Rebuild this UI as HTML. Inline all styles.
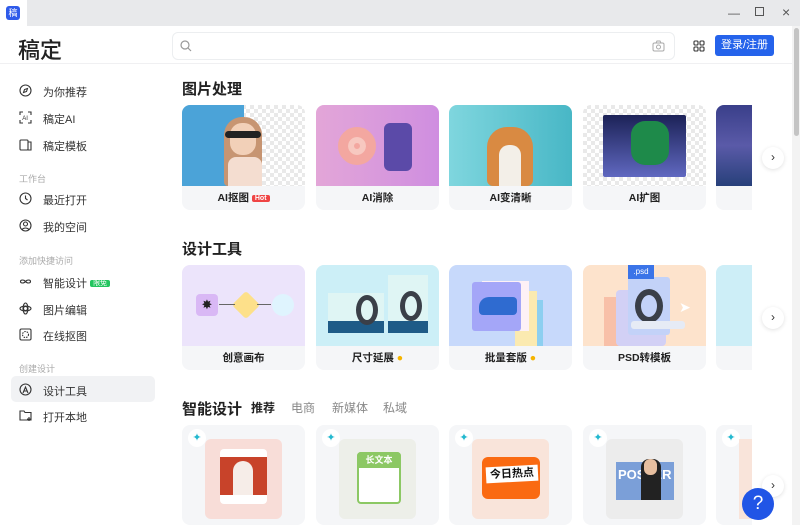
<!DOCTYPE html>
<html><head><meta charset="utf-8"><style>
*{box-sizing:border-box;margin:0;padding:0}
body{width:800px;height:525px;overflow:hidden;background:#fff;font-family:"Liberation Sans","Noto Sans CJK SC",sans-serif;position:relative;color:#222}
.tb{position:absolute;left:0;top:0;width:800px;height:26px;background:#e8e9eb}
.tab{position:absolute;left:0;top:0;width:27px;height:26px;background:#fff}
.logo{position:absolute;left:6px;top:6px;width:14px;height:14px;background:#2f5bea;border-radius:3px;color:#fff;font-size:9px;text-align:center;line-height:14px}
.wc{position:absolute;top:6px;font-size:12px;color:#555}
.hd{position:absolute;left:0;top:26px;width:792px;height:38px;border-bottom:1px solid #f0f0f2;background:#fff}
.brand{position:absolute;left:18px;top:33px;font-size:22px;font-weight:500;color:#222}
.search{position:absolute;left:172px;top:32px;width:103px;height:28px}
.sb{position:absolute;left:172px;top:32px;width:503px;height:28px;border:1px solid #eceef0;border-radius:6px;background:#fff}
.btn{position:absolute;left:715px;top:35px;width:59px;height:21px;background:#2563eb;border-radius:3px;color:#fff;font-size:11px;text-align:center;line-height:21px}
.nav{position:absolute;left:43px;font-size:11px;color:#333}
.ico{position:absolute;left:19px;width:13px;height:13px}
.sec{position:absolute;left:19px;font-size:9px;color:#aaa}
.act{position:absolute;left:11px;top:376px;width:144px;height:26px;background:#f1f2f4;border-radius:5px}
h2{position:absolute;left:182px;font-size:15px;font-weight:700;color:#222}
.card{position:absolute;width:123px;border-radius:8px;overflow:hidden;background:#f5f6f8}
.card .im{position:absolute;left:0;top:0;width:100%;height:81px}
.card .lb{position:absolute;left:0;top:81px;width:100%;height:24px;text-align:center;font-size:10.5px;font-weight:700;line-height:24px;color:#222}
.arr{position:absolute;left:762px;width:22px;height:22px;border-radius:50%;background:#fff;box-shadow:0 1px 4px rgba(0,0,0,.12);text-align:center;line-height:21px;font-size:12px;color:#333}
.tabs{position:absolute;top:399px;font-size:12px;color:#888}
.sc{position:absolute;top:425px;width:123px;height:100px;background:#f5f6f8;border-radius:8px;overflow:hidden}
.sc .in{position:absolute;left:23px;top:14px;width:77px;height:80px;border-radius:6px}
.spk{position:absolute;left:6px;top:4px;width:18px;height:18px;border-radius:50%;background:#fff;color:#22b8cf;font-size:11px;text-align:center;line-height:18px}
.chk{background-color:#fff;background-image:linear-gradient(45deg,#e9e9e9 25%,transparent 25%,transparent 75%,#e9e9e9 75%),linear-gradient(45deg,#e9e9e9 25%,transparent 25%,transparent 75%,#e9e9e9 75%);background-size:8px 8px;background-position:0 0,4px 4px}
</style></head><body>
<div class="tb"></div><div class="tab"></div><div class="logo">稿</div>
<div class="wc" style="left:728px">—</div><div class="wc" style="left:755px;top:7px;width:9px;height:9px;border:1px solid #555"></div><div class="wc" style="left:782px;top:4px;font-size:14px">×</div>
<div class="hd"></div>
<div class="brand">稿定</div>
<div class="sb"></div>
<svg style="position:absolute;left:180px;top:40px" width="12" height="12"><circle cx="5" cy="5" r="4" fill="none" stroke="#999" stroke-width="1.2"/><path d="M8 8l3 3" stroke="#999" stroke-width="1.2"/></svg>
<svg style="position:absolute;left:652px;top:40px" width="13" height="12"><rect x="1" y="3" width="11" height="8" rx="1.5" fill="none" stroke="#aaa"/><circle cx="6.5" cy="7" r="2" fill="none" stroke="#aaa"/><path d="M4 3l1-2h3l1 2" fill="none" stroke="#aaa"/></svg>
<svg style="position:absolute;left:693px;top:40px" width="12" height="12" fill="none" stroke="#333" stroke-width="1.1"><rect x="1" y="1" width="4" height="4" rx="1"/><rect x="7" y="1" width="4" height="4" rx="1"/><rect x="1" y="7" width="4" height="4" rx="1"/><rect x="7" y="7" width="4" height="4" rx="1"/></svg>
<div class="btn">登录/注册</div>
<div style="position:absolute;left:792px;top:26px;width:8px;height:499px;background:#f3f3f3"></div>
<div style="position:absolute;left:794px;top:28px;width:5px;height:108px;background:#c4c4c4;border-radius:3px"></div>

<svg class="ico" style="top:84px" viewBox="0 0 13 13" fill="none" stroke="#333" stroke-width="1.1"><circle cx="6.5" cy="6.5" r="5.5"/><path d="M8.5 4.5L7.5 7.5 4.5 8.5 5.5 5.5z"/></svg><div class="nav" style="top:84px">为你推荐</div>
<svg class="ico" style="top:111px" viewBox="0 0 13 13" fill="none" stroke="#333" stroke-width="1.1"><path d="M1 4V1h3M9 1h3v3M12 9v3H9M4 12H1V9"/><text x="3.2" y="9" font-size="6" fill="#333" stroke="none">AI</text></svg><div class="nav" style="top:111px">稿定AI</div>
<svg class="ico" style="top:138px" viewBox="0 0 13 13" fill="none" stroke="#333" stroke-width="1.1"><rect x="1" y="2" width="8" height="10" rx="1"/><path d="M9 4h3v8H9"/></svg><div class="nav" style="top:138px">稿定模板</div>
<div class="sec" style="top:172px">工作台</div>
<svg class="ico" style="top:192px" viewBox="0 0 13 13" fill="none" stroke="#333" stroke-width="1.1"><circle cx="6.5" cy="6.5" r="5.5"/><path d="M6.5 3.5v3l2 1.5"/></svg><div class="nav" style="top:192px">最近打开</div>
<svg class="ico" style="top:219px" viewBox="0 0 13 13" fill="none" stroke="#333" stroke-width="1.1"><circle cx="6.5" cy="6.5" r="5.5"/><circle cx="6.5" cy="5" r="2"/><path d="M3 10.5c2-2 5-2 7 0"/></svg><div class="nav" style="top:219px">我的空间</div>
<div class="sec" style="top:254px">添加快捷访问</div>
<svg class="ico" style="top:275px" viewBox="0 0 13 13" fill="none" stroke="#333" stroke-width="1.1"><path d="M6.5 6.5c-1.5-2-5-2-5 0s3.5 2 5 0 5-2 5 0-3.5 2-5 0z"/></svg><div class="nav" style="top:275px">智能设计 <span style="background:#22c55e;color:#fff;font-size:7px;padding:0 3px;border-radius:2px;vertical-align:2px">限免</span></div>
<svg class="ico" style="top:302px" viewBox="0 0 13 13" fill="none" stroke="#333" stroke-width="1.1"><circle cx="6.5" cy="6.5" r="2"/><ellipse cx="6.5" cy="6.5" rx="5.5" ry="2.5"/><ellipse cx="6.5" cy="6.5" rx="2.5" ry="5.5"/></svg><div class="nav" style="top:302px">图片编辑</div>
<svg class="ico" style="top:328px" viewBox="0 0 13 13" fill="none" stroke="#333" stroke-width="1.1"><rect x="1" y="1" width="11" height="11" rx="1.5"/><circle cx="6.5" cy="6.5" r="3" stroke-dasharray="1.5 1"/></svg><div class="nav" style="top:328px">在线抠图</div>
<div class="sec" style="top:362px">创建设计</div>
<div class="act"></div>
<svg class="ico" style="top:383px" viewBox="0 0 13 13" fill="none" stroke="#333" stroke-width="1.1"><circle cx="6.5" cy="6.5" r="5.5"/><path d="M4 10l2.5-6 2.5 6M5 8h3"/></svg><div class="nav" style="top:383px">设计工具</div>
<svg class="ico" style="top:409px" viewBox="0 0 13 13" fill="none" stroke="#333" stroke-width="1.1"><path d="M1 2h4l1 1.5h6V11H1z"/><path d="M10 8v4M8 10h4"/></svg><div class="nav" style="top:409px">打开本地</div>

<h2 style="top:78px">图片处理</h2>
<div class="card" style="left:182px;top:105px;height:105px"><div class="im chk"><div style="position:absolute;left:0;top:0;width:62px;height:81px;background:#4ba3d8"></div><div style="position:absolute;left:42px;top:12px;width:38px;height:69px;background:#c79572;border-radius:18px 18px 4px 4px"></div><div style="position:absolute;left:48px;top:18px;width:26px;height:32px;background:#f2d0b8;border-radius:12px"></div><div style="position:absolute;left:43px;top:26px;width:36px;height:7px;background:#222;border-radius:4px"></div><div style="position:absolute;left:46px;top:52px;width:34px;height:29px;background:#f4ddd0;border-radius:8px 8px 0 0"></div></div><div class="lb">AI抠图 <span style="background:#ef4444;color:#fff;font-size:7px;padding:0 3px;border-radius:2px;vertical-align:1px">Hot</span></div></div>
<div class="card" style="left:316px;top:105px;height:105px"><div class="im" style="background:linear-gradient(90deg,#e3a6d8,#cf8ee0)"><div style="position:absolute;left:22px;top:22px;width:38px;height:38px;border-radius:50%;background:#f3a7a0;border:10px solid #f3a7a0;box-shadow:inset 0 0 0 6px #f7c8c0"></div><div style="position:absolute;left:68px;top:18px;width:28px;height:48px;background:#5b4aa8;border-radius:6px"></div></div><div class="lb">AI消除</div></div>
<div class="card" style="left:449px;top:105px;height:105px"><div class="im" style="background:linear-gradient(90deg,#7fd6de,#48b7c6)"><div style="position:absolute;left:38px;top:22px;width:46px;height:59px;background:#d98a42;border-radius:20px 20px 6px 6px"></div><div style="position:absolute;left:50px;top:40px;width:22px;height:41px;background:#f3efe8;border-radius:10px 10px 0 0"></div></div><div class="lb">AI变清晰</div></div>
<div class="card" style="left:583px;top:105px;height:105px"><div class="im chk"><div style="position:absolute;left:20px;top:10px;width:83px;height:62px;background:linear-gradient(#1c2257,#6068c0);border-radius:2px"></div><div style="position:absolute;left:48px;top:16px;width:38px;height:44px;background:#1e8a4a;border-radius:14px"></div></div><div class="lb">AI扩图</div></div>
<div class="card" style="left:716px;top:105px;height:105px;width:36px;border-radius:8px 0 0 8px"><div class="im" style="background:linear-gradient(#3a3f8a,#5a5aa8 50%,#27407a)"></div></div>
<div class="arr" style="top:147px">›</div>

<h2 style="top:238px">设计工具</h2>
<div class="card" style="left:182px;top:265px;height:105px"><div class="im" style="background:#ece4fb"><div style="position:absolute;left:14px;top:29px;width:22px;height:22px;background:#d9b8f5;border-radius:4px;text-align:center;line-height:22px;font-size:13px">✸</div><div style="position:absolute;left:54px;top:30px;width:20px;height:20px;background:#fde08a;transform:rotate(45deg);border-radius:3px"></div><div style="position:absolute;left:90px;top:29px;width:22px;height:22px;background:#dff4fe;border-radius:50%"></div><div style="position:absolute;left:37px;top:39px;width:16px;height:1px;background:#666"></div><div style="position:absolute;left:75px;top:39px;width:14px;height:1px;background:#666"></div></div><div class="lb">创意画布</div></div>
<div class="card" style="left:316px;top:265px;height:105px"><div class="im" style="background:#cceff7"><div style="position:absolute;left:12px;top:28px;width:56px;height:40px;background:#dff5f4;border-bottom:12px solid #1e5b87"></div><div style="position:absolute;left:72px;top:10px;width:40px;height:58px;background:#dff5f4;border-bottom:12px solid #1e5b87"></div><div style="position:absolute;left:40px;top:30px;width:22px;height:30px;border-radius:50%;border:5px solid #3a3f48"></div><div style="position:absolute;left:84px;top:26px;width:22px;height:30px;border-radius:50%;border:5px solid #3a3f48"></div></div><div class="lb">尺寸延展 <span style="color:#f5b400">●</span></div></div>
<div class="card" style="left:449px;top:265px;height:105px"><div class="im" style="background:#c7d9fb"><div style="position:absolute;left:82px;top:35px;width:12px;height:46px;background:#8ccff0"></div><div style="position:absolute;left:66px;top:26px;width:22px;height:55px;background:#fbeab0"></div><div style="position:absolute;left:33px;top:16px;width:47px;height:50px;background:#fdf1f6"></div><div style="position:absolute;left:23px;top:17px;width:49px;height:49px;background:#a4a6f8;border-radius:3px"></div><div style="position:absolute;left:30px;top:32px;width:38px;height:18px;background:#2f6bd0;border-radius:10px 4px 4px 4px"></div></div><div class="lb">批量套版 <span style="color:#f5b400">●</span></div></div>
<div class="card" style="left:583px;top:265px;height:105px"><div class="im" style="background:#fde3cc"><div style="position:absolute;left:21px;top:32px;width:20px;height:49px;background:#f8c0a8"></div><div style="position:absolute;left:33px;top:25px;width:50px;height:56px;background:#d2d0f5;border-radius:4px"></div><div style="position:absolute;left:45px;top:12px;width:42px;height:58px;background:#c3d2f8;border-radius:3px"></div><div style="position:absolute;left:45px;top:0;width:26px;height:14px;background:#3b74e8;color:#fff;font-size:8px;text-align:center;line-height:14px">.psd</div><div style="position:absolute;left:52px;top:24px;width:28px;height:34px;border-radius:50%;border:6px solid #3a3f48"></div><div style="position:absolute;left:48px;top:56px;width:54px;height:8px;background:#e6ebf5;border-radius:3px"></div><div style="position:absolute;left:96px;top:34px;color:#fff;font-size:14px">➤</div></div><div class="lb">PSD转模板</div></div>
<div class="card" style="left:716px;top:265px;height:105px;width:36px;border-radius:8px 0 0 8px"><div class="im" style="background:#cdeef7"></div></div>
<div class="arr" style="top:307px">›</div>

<h2 style="top:398px">智能设计</h2>
<div class="tabs" style="left:251px;color:#222;font-weight:700">推荐</div>
<div class="tabs" style="left:291px">电商</div>
<div class="tabs" style="left:332px">新媒体</div>
<div class="tabs" style="left:383px">私域</div>
<div class="sc" style="left:182px"><div class="in" style="background:#f8ddd8"><div style="position:absolute;left:15px;top:10px;width:47px;height:55px;background:#fff;border-radius:4px"></div><div style="position:absolute;left:15px;top:18px;width:47px;height:38px;background:#c8432a"></div><div style="position:absolute;left:28px;top:22px;width:20px;height:34px;background:#f6ede8;border-radius:10px 10px 0 0"></div></div><div class="spk">✦</div></div>
<div class="sc" style="left:316px"><div class="in" style="background:#edefe9"><div style="position:absolute;left:18px;top:13px;width:44px;height:52px;background:#fff;border:2px solid #8cc864;border-radius:4px"></div><div style="position:absolute;left:18px;top:13px;width:44px;height:16px;background:#8cc864;color:#fff;font-size:9px;font-weight:700;text-align:center;line-height:16px;border-radius:4px 4px 0 0">长文本</div></div><div class="spk">✦</div></div>
<div class="sc" style="left:449px"><div class="in" style="background:#f9e4da"><div style="position:absolute;left:10px;top:18px;width:58px;height:42px;background:#fa6a12;border-radius:6px"></div><div style="position:absolute;left:14px;top:27px;width:52px;height:16px;background:#fff;transform:rotate(-3deg);font-size:11px;font-weight:700;text-align:center;line-height:16px;color:#111">今日热点</div></div><div class="spk">✦</div></div>
<div class="sc" style="left:583px"><div class="in" style="background:#ececec"><div style="position:absolute;left:10px;top:23px;width:58px;height:38px;background:#7b9fd8;color:#fff;font-size:13px;font-weight:700;line-height:26px;padding-left:2px">POSTER</div><div style="position:absolute;left:35px;top:20px;width:20px;height:41px;background:#222;border-radius:8px 8px 0 0"></div><div style="position:absolute;left:38px;top:20px;width:13px;height:16px;background:#e7bfa0;border-radius:6px"></div></div><div class="spk">✦</div></div>
<div class="sc" style="left:716px;width:36px;border-radius:8px 0 0 8px"><div class="spk">✦</div><div style="position:absolute;left:23px;top:14px;width:13px;height:80px;background:#f9e4da"></div></div>
<div class="arr" style="top:475px">›</div>
<div style="position:absolute;left:742px;top:488px;width:32px;height:32px;border-radius:50%;background:#2155e6;color:#fff;font-size:19px;text-align:center;line-height:32px">?</div>
</body></html>
